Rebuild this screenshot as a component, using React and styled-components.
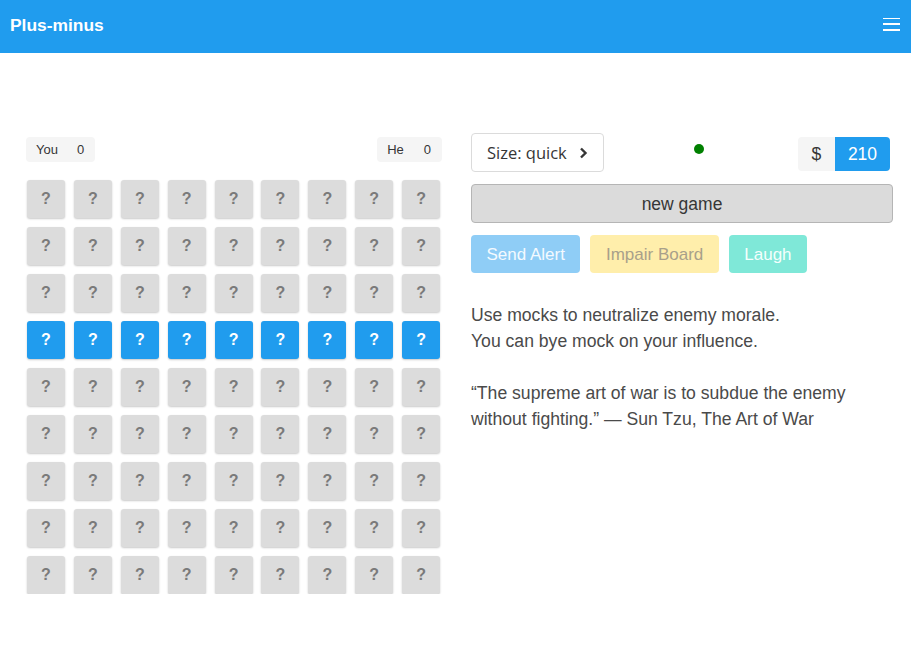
import React from "react";
import styled, { createGlobalStyle } from "styled-components";

const Global = createGlobalStyle`
  html, body { margin: 0; padding: 0; background: #fff; }
  body { font-family: "Liberation Sans", Arial, sans-serif; color: #4a4a4a; }
  * { box-sizing: border-box; }
`;

const NavBar = styled.header`
  height: 53px;
  background: #209cee;
  display: flex;
  align-items: center;
  justify-content: space-between;
  padding: 0 11px 0 10px;
`;

const Brand = styled.div`
  color: #fff;
  font-weight: bold;
  font-size: 17.4px;
  margin-top: -2px;
`;

const Burger = styled.div`
  width: 17px;
  display: flex;
  flex-direction: column;
  gap: 4px;
  margin-top: -5px;
  span {
    display: block;
    height: 1.5px;
    background: #fff;
  }
`;

const Main = styled.main`
  display: flex;
  padding: 80px 18px 0 26px;
  gap: 29px;
`;

const LeftCol = styled.section`
  width: 416px;
  flex: none;
  padding-top: 4px;
`;

const ScoreRow = styled.div`
  display: flex;
  justify-content: space-between;
  margin-bottom: 18px;
`;

const Score = styled.div`
  display: flex;
  align-items: center;
  gap: ${(p) => p.$gap}px;
  height: 25px;
  padding: 0 11px 0 10px;
  background: #f5f5f5;
  border-radius: 4px;
  font-size: 13px;
  color: #363636;
`;

const Board = styled.div`
  display: grid;
  grid-template-columns: repeat(9, 38px);
  grid-auto-rows: 38px;
  column-gap: 8.9px;
  row-gap: 9px;
  padding-left: 1px;
`;

const Cell = styled.div`
  border-radius: 3px;
  background: ${(p) => (p.$active ? "#209cee" : "#dcdcdc")};
  color: ${(p) => (p.$active ? "#fff" : "#7a7a7a")};
  box-shadow: 0 1px 2px rgba(10, 10, 10, 0.22);
  display: flex;
  align-items: center;
  justify-content: center;
  font-weight: bold;
  font-size: 16px;
`;

const RightCol = styled.section`
  flex: 1;
  display: flex;
  flex-direction: column;
`;

const TopRow = styled.div`
  display: flex;
  align-items: center;
  justify-content: space-between;
  padding-right: 3px;
`;

const SizeButton = styled.button`
  height: 39px;
  padding: 0 15px;
  display: flex;
  align-items: center;
  gap: 12px;
  background: #fff;
  border: 1px solid #dbdbdb;
  border-radius: 4px;
  font-family: "Open Sans", "Noto Sans", sans-serif;
  font-size: 16.5px;
  color: #363636;
`;

const Dot = styled.span`
  width: 10px;
  height: 10px;
  border-radius: 50%;
  background: #008000;
  margin: -8px 3px 0 0;
`;

const Money = styled.div`
  display: flex;
  height: 34px;
  margin-top: 3px;
  border-radius: 4px;
  overflow: hidden;
  font-size: 17.5px;
`;

const MoneyPart = styled.span`
  display: flex;
  align-items: center;
  justify-content: center;
  width: ${(p) => p.$w}px;
  background: ${(p) => (p.$primary ? "#209cee" : "#f5f5f5")};
  color: ${(p) => (p.$primary ? "#fff" : "#363636")};
`;

const NewGame = styled.button`
  margin-top: 12px;
  height: 39px;
  width: 100%;
  background: #dbdbdb;
  border: 1px solid #b5b5b5;
  border-radius: 4px;
  font-family: "Liberation Sans", Arial, sans-serif;
  font-size: 17.5px;
  color: #363636;
  padding-top: 2px;
`;

const Actions = styled.div`
  margin-top: 12px;
  display: flex;
  gap: 10px;
`;

const ActionButton = styled.button`
  height: 38px;
  padding: 1px 15.5px 0;
  border: none;
  border-radius: 4px;
  font-family: "Liberation Sans", Arial, sans-serif;
  font-size: 17px;
  background: ${(p) => p.$bg};
  color: ${(p) => p.$fg};
`;

const Text = styled.p`
  margin: 29px 0 0;
  font-size: 17.6px;
  line-height: 26px;
  color: #4a4a4a;
`;

const rows = Array.from({ length: 9 }, (_, r) => r);
const cols = Array.from({ length: 9 }, (_, c) => c);

export default function App() {
  return (
    <>
      <Global />
      <NavBar>
        <Brand>Plus-minus</Brand>
        <Burger>
          <span />
          <span style={{ height: "2px" }} />
          <span />
        </Burger>
      </NavBar>
      <Main>
        <LeftCol>
          <ScoreRow>
            <Score $gap={19}>
              <span>You</span>
              <span>0</span>
            </Score>
            <Score $gap={20}>
              <span>He</span>
              <span>0</span>
            </Score>
          </ScoreRow>
          <Board>
            {rows.map((r) =>
              cols.map((c) => (
                <Cell key={`${r}-${c}`} $active={r === 3}>
                  ?
                </Cell>
              ))
            )}
          </Board>
        </LeftCol>
        <RightCol>
          <TopRow>
            <SizeButton>
              <span>Size: quick</span>
              <svg width="9" height="12" viewBox="0 0 9 12">
                <path d="M2 1.5 L6.5 6 L2 10.5" fill="none" stroke="#363636" strokeWidth="2.4" />
              </svg>
            </SizeButton>
            <Dot />
            <Money>
              <MoneyPart $w={37}>$</MoneyPart>
              <MoneyPart $w={55} $primary>210</MoneyPart>
            </Money>
          </TopRow>
          <NewGame>new game</NewGame>
          <Actions>
            <ActionButton $bg="#8fcdf6" $fg="#f4faff">Send Alert</ActionButton>
            <ActionButton $bg="#ffeeab" $fg="#a8a08a">Impair Board</ActionButton>
            <ActionButton $bg="#7fe8d8" $fg="#f4fffd">Laugh</ActionButton>
          </Actions>
          <Text>
            Use mocks to neutralize enemy morale.
            <br />
            You can bye mock on your influence.
            <br />
            <br />
            “The supreme art of war is to subdue the enemy
            <br />
            without fighting.” — Sun Tzu, The Art of War
          </Text>
        </RightCol>
      </Main>
    </>
  );
}
